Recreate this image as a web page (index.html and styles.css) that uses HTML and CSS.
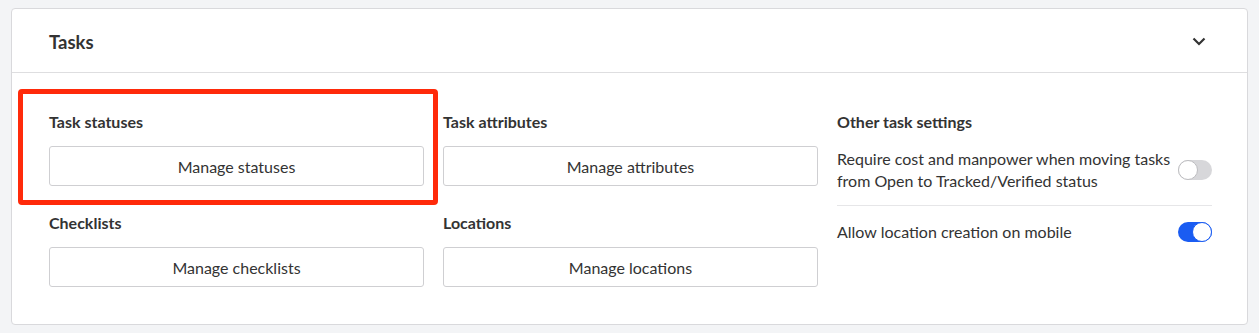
FILE: index.html
```html
<!DOCTYPE html>
<html lang="en">
<head>
  <meta charset="UTF-8" />
  <title>Tasks settings</title>
  <link rel="stylesheet" href="styles.css">
</head>
<body>

  <div class="card">
    <div class="card-header">
      <h2>Tasks</h2>
      <svg class="chevron" width="14" height="14" viewBox="0 0 14 14">
        <polyline points="1.5,4.5 7,10 12.5,4.5" fill="none" stroke="#333" stroke-width="2.2" />
      </svg>
    </div>

    <div class="card-body">
      <!-- kotak merah penanda -->
      <div class="highlight"></div>

      <div class="column">
        <div class="section">
          <h3>Task statuses</h3>
          <button>Manage statuses</button>
        </div>
        <div class="section">
          <h3>Checklists</h3>
          <button>Manage checklists</button>
        </div>
      </div>

      <div class="column">
        <div class="section">
          <h3>Task attributes</h3>
          <button>Manage attributes</button>
        </div>
        <div class="section">
          <h3>Locations</h3>
          <button>Manage locations</button>
        </div>
      </div>

      <div class="column">
        <h3>Other task settings</h3>
        <div class="setting">
          <span>Require cost and manpower when moving tasks from Open to Tracked/Verified status</span>
          <div class="toggle"></div>
        </div>
        <div class="setting">
          <span>Allow location creation on mobile</span>
          <div class="toggle on"></div>
        </div>
      </div>
    </div>
  </div>

</body>
</html>
```

FILE: styles.css
```css
body {
  margin: 0;
  padding: 8px 11px;
  background-color: #f3f4f6;
  font-family: 'Lato', 'Open Sans', sans-serif;
  color: #333;
}

.card {
  background: white;
  border: 1px solid #d9d9dc;
  border-radius: 4px;
}

.card-header {
  height: 63px;
  display: flex;
  align-items: center;
  justify-content: space-between;
  padding: 0 41px 0 37px;
  border-bottom: 1px solid #dedee0;
}

.card-header h2 {
  margin: 2px 0 0;
  font-size: 18.5px;
  font-weight: 700;
}

.chevron {
  margin-top: 1px;
}

.card-body {
  position: relative;
  display: grid;
  grid-template-columns: 1fr 1fr 1fr;
  column-gap: 19px;
  padding: 39px 35px 37px 37px;
}

h3 {
  margin: 0 0 14px;
  font-size: 16px;
  line-height: 20px;
  font-weight: 700;
}

.section + .section {
  margin-top: 27px;
}

button {
  display: block;
  width: 100%;
  height: 40px;
  background: white;
  border: 1px solid #cfcfd2;
  border-radius: 3px;
  font-family: inherit;
  font-size: 16px;
  color: #333;
  cursor: pointer;
}

.setting {
  display: flex;
  align-items: center;
  justify-content: space-between;
  font-size: 16px;
  line-height: 22px;
  padding: 15px 0 13px;
}

.setting:first-of-type {
  padding-top: 2px;
  border-bottom: 1px solid #e6e6e8;
}

.toggle {
  flex-shrink: 0;
  position: relative;
  width: 34px;
  height: 20px;
  margin-left: 2px;
  border-radius: 10px;
  background: #d7d7da;
}

.toggle::after {
  content: "";
  position: absolute;
  top: 0;
  left: 0;
  width: 18px;
  height: 18px;
  border-radius: 50%;
  background: white;
  border: 1px solid #bdbdc0;
}

.toggle.on {
  background: #1a5cf2;
}

.toggle.on::after {
  left: auto;
  right: 0;
  border-color: #1a5cf2;
}

/* Kotak merah */
.highlight {
  position: absolute;
  top: 16px;
  left: 6px;
  width: 410px;
  height: 106px;
  border: 5px solid #ff2a0a;
  border-radius: 4px;
  pointer-events: none;
}
```
